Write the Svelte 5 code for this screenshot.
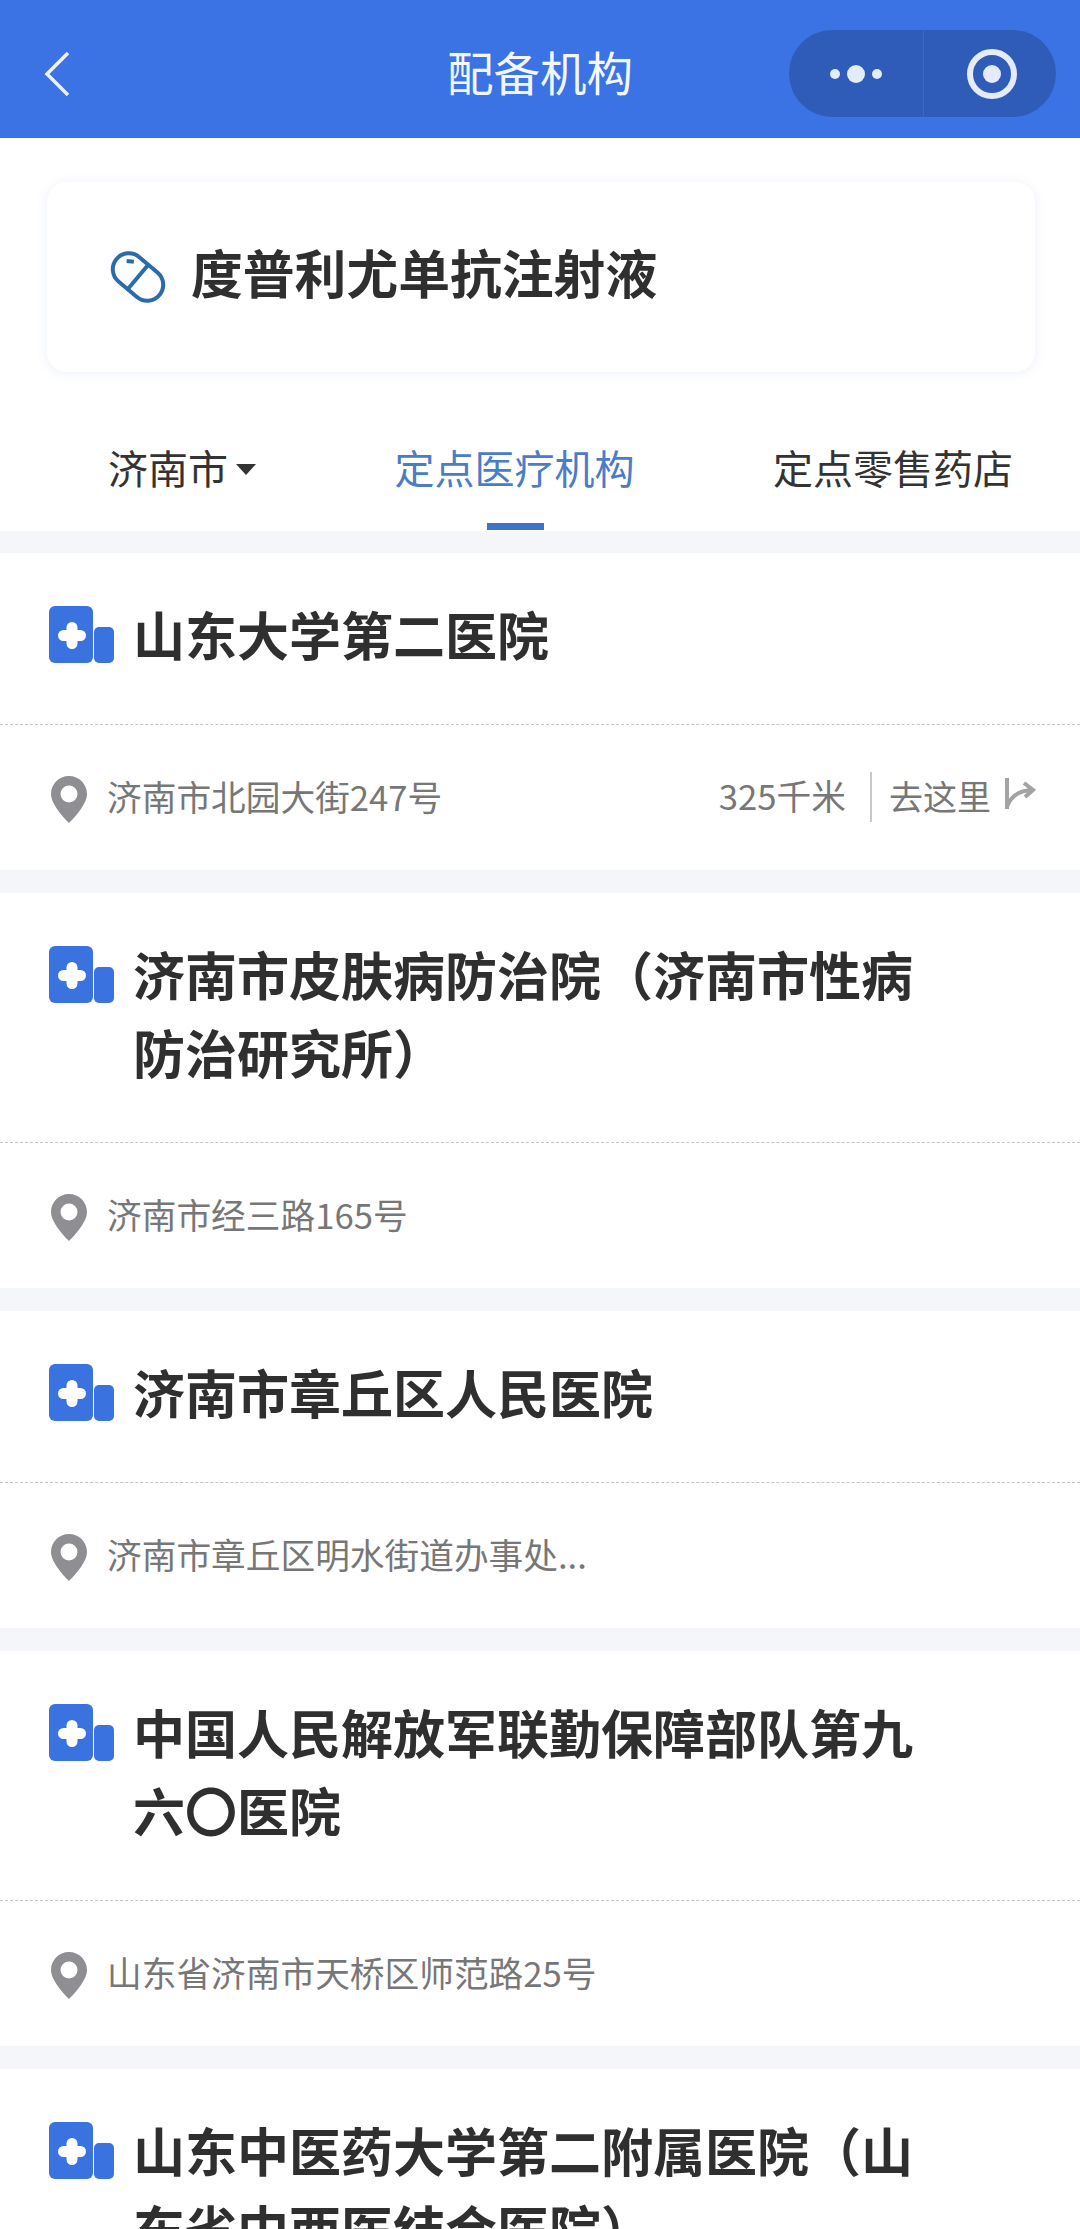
<script>
  const places = [
    { name: '山东大学第二医院', address: '济南市北园大街247号', distance: '325千米' },
    { name: '济南市皮肤病防治院（济南市性病防治研究所）', address: '济南市经三路165号' },
    { name: '济南市章丘区人民医院', address: '济南市章丘区明水街道办事处...' },
    { name: '中国人民解放军联勤保障部队第九六〇医院', address: '山东省济南市天桥区师范路25号' },
    { name: '山东中医药大学第二附属医院（山东省中西医结合医院）', address: '' },
  ];
</script>

<div class="page" lang="zh-CN">
  <header class="nav">
    <svg class="nav__back" viewBox="0 0 26 46" aria-hidden="true">
      <path d="M24 2 L3 23 L24 44" />
    </svg>
    <h1 class="nav__title">配备机构</h1>
    <div class="capsule">
      <div class="capsule__more">
        <i class="dot"></i><i class="dot dot--big"></i><i class="dot"></i>
      </div>
      <div class="capsule__target"><i></i></div>
    </div>
  </header>

  <div class="drug-wrap">
    <div class="drug">
      <svg class="drug__icon" viewBox="0 0 56 52" aria-hidden="true">
        <g transform="rotate(40 28 26)">
          <rect x="0" y="10" width="56" height="32" rx="16" />
          <path d="M28 10 V42" />
          <path d="M9 21 L15 17" />
        </g>
      </svg>
      <span class="drug__name">度普利尤单抗注射液</span>
    </div>
  </div>

  <nav class="tabs">
    <span class="tab tab--city">济南市<i class="caret"></i></span>
    <span class="tab tab--active">定点医疗机构</span>
    <span class="tab">定点零售药店</span>
  </nav>

  <main class="list">
    {#each places as place}
      <section class="place">
        <div class="place__head">
          <svg class="place__icon" viewBox="0 0 65 57" aria-hidden="true">
            <rect width="44" height="57" rx="6" />
            <rect x="45" y="21" width="20" height="36" rx="5" />
            <path class="cross" d="M14.5 29.5 H31.5 M23 21.5 V37.5" />
          </svg>
          <h2 class="place__name">{place.name}</h2>
        </div>
        {#if place.address}
          <div class="place__foot">
            <svg class="pin" viewBox="0 0 36 47" aria-hidden="true">
              <path fill-rule="evenodd" d="M18 0 C8 0 0 8 0 18 C0 30 18 47 18 47 C18 47 36 30 36 18 C36 8 28 0 18 0 Z M18 9.5 A8.5 8.5 0 1 1 18 26.5 A8.5 8.5 0 1 1 18 9.5 Z" />
            </svg>
            <span class="place__address">{place.address}</span>
            {#if place.distance}
              <span class="place__distance">{place.distance}</span>
              <span class="place__go">
                去这里
                <svg class="go-arrow" viewBox="0 0 32 34" aria-hidden="true">
                  <path d="M3 1 V32 M3 30 Q8 14 28 13 M20 6 L29 13 L21 20" />
                </svg>
              </span>
            {/if}
          </div>
        {/if}
      </section>
    {/each}
  </main>
</div>

<style>
  :global(body) {
    margin: 0;
    background: #fff;
  }

  .page {
    width: 1080px;
    height: 2229px;
    overflow: hidden;
    font-family: "Noto Sans CJK SC", sans-serif;
    background: #fff;
  }

  .nav {
    position: relative;
    display: flex;
    align-items: center;
    justify-content: space-between;
    height: 138px;
    padding: 0 24px 0 44px;
    box-sizing: border-box;
    background: #3b72e4;
  }

  .nav__back {
    width: 26px;
    height: 46px;
    margin-top: 10px;
    fill: none;
    stroke: #eef3fd;
    stroke-width: 3.5;
  }

  .nav__title {
    position: absolute;
    left: 0;
    right: 0;
    top: 42px;
    margin: 0;
    font-size: 46.5px;
    font-weight: 400;
    line-height: 58px;
    text-align: center;
    color: #f2f6fe;
  }

  .capsule {
    display: flex;
    width: 267px;
    height: 87px;
    margin-top: 9px;
    border-radius: 44px;
    background: #2f5cb8;
  }

  .capsule__more {
    display: flex;
    align-items: center;
    justify-content: center;
    gap: 7px;
    width: 134px;
    border-right: 1px solid #3a68c4;
  }

  .dot {
    width: 10px;
    height: 10px;
    border-radius: 50%;
    background: #e4ebfa;
  }

  .dot--big {
    width: 18px;
    height: 18px;
  }

  .capsule__target {
    flex: 1;
    display: flex;
    align-items: center;
    justify-content: center;
    padding-left: 3px;
  }

  .capsule__target i {
    display: flex;
    align-items: center;
    justify-content: center;
    width: 50px;
    height: 50px;
    box-sizing: border-box;
    border: 6px solid #e4ebfa;
    border-radius: 50%;
  }

  .capsule__target i::after {
    content: "";
    width: 18px;
    height: 18px;
    border-radius: 50%;
    background: #e4ebfa;
  }

  .drug-wrap {
    padding: 44px 45px 0 47px;
  }

  .drug {
    display: flex;
    align-items: center;
    gap: 25px;
    height: 190px;
    padding-left: 63px;
    border-radius: 20px;
    background: #fff;
    box-shadow: 0 1px 12px rgba(70, 110, 190, 0.1);
  }

  .drug__icon {
    width: 56px;
    height: 52px;
    fill: none;
    stroke: #2a6bad;
    stroke-width: 4;
  }

  .drug__name {
    padding-bottom: 10px;
    font-size: 51.8px;
    line-height: 62px;
    font-weight: 700;
    color: #2f2f2f;
  }

  .tabs {
    display: flex;
    align-items: flex-start;
    justify-content: space-between;
    height: 159px;
    padding: 69px 67px 0 108px;
    box-sizing: border-box;
  }

  .tab {
    position: relative;
    font-size: 40px;
    line-height: 52px;
    color: #333;
  }

  .tab--city {
    display: flex;
    align-items: center;
    gap: 8px;
  }

  .caret {
    width: 0;
    height: 0;
    margin-top: 5px;
    border-left: 10px solid transparent;
    border-right: 10px solid transparent;
    border-top: 11px solid #333;
  }

  .tab--active {
    color: #4a7cc9;
  }

  .tab--active::after {
    content: "";
    position: absolute;
    left: 92px;
    top: 82px;
    width: 57px;
    height: 7px;
    background: #3f72c6;
  }

  .list {
    display: flex;
    flex-direction: column;
    gap: 23px;
    padding-top: 22px;
    background: #f5f6fa;
  }

  .place {
    background: #fff;
  }

  .place__head {
    display: flex;
    align-items: flex-start;
    gap: 19px;
    padding: 42px 144px 51px 49px;
    border-bottom: 1px dashed #c4c4c4;
  }

  .place__icon {
    flex: none;
    width: 65px;
    height: 57px;
    margin-top: 11px;
    fill: #3a72e0;
  }

  .cross {
    fill: none;
    stroke: #fff;
    stroke-width: 11;
    stroke-linecap: round;
  }

  .place__name {
    margin: 0;
    font-size: 52px;
    font-weight: 700;
    line-height: 78px;
    color: #2f2f2f;
  }

  .place__foot {
    display: flex;
    align-items: center;
    height: 145px;
    padding: 0 44px 0 51px;
    box-sizing: border-box;
    color: #777;
    font-size: 34.7px;
    line-height: 50px;
  }

  .pin {
    flex: none;
    width: 36px;
    height: 47px;
    margin: 4px 20px 0 0;
    fill: #8e8e93;
  }

  .place__address {
    flex: 1;
    padding-bottom: 4px;
  }

  .place__distance {
    padding: 0 24px 4px 0;
    border-right: 2px solid #c9c9c9;
    line-height: 46px;
    margin-top: -2px;
  }

  .place__go {
    display: flex;
    align-items: center;
    gap: 13px;
    padding-left: 17px;
    padding-bottom: 4px;
    font-size: 34px;
  }

  .go-arrow {
    width: 32px;
    height: 34px;
    margin-top: -4px;
    fill: none;
    stroke: #a3a3a3;
    stroke-width: 4;
  }
</style>
